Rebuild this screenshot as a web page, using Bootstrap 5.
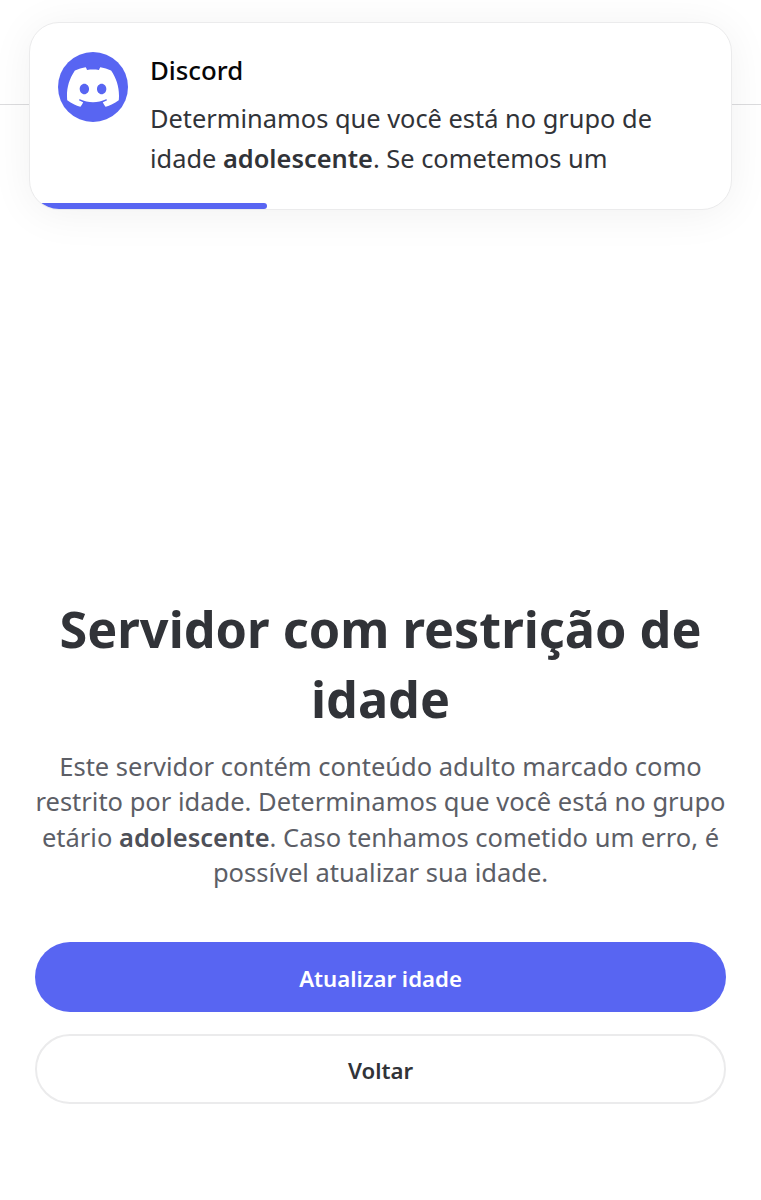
<!DOCTYPE html>
<html lang="pt">
<head>
    <meta charset="UTF-8">
    <meta name="viewport" content="width=device-width, initial-scale=1.0">
    <title>Servidor com restrição de idade</title>
    <link href="https://cdn.jsdelivr.net/npm/bootstrap@5.3.0/dist/css/bootstrap.min.css" rel="stylesheet">
    <style>
        body {
            background-color: #fff;
            font-family: "Noto Sans", sans-serif;
            color: #313338;
        }
        .screen {
            height: 1200px;
            overflow: hidden;
        }
        .top-bar {
            height: 105px;
            border-bottom: 1px solid #dcdcde;
        }
        .notice {
            top: 22px;
            left: 29px;
            width: 703px;
            height: 188px;
            background-color: #fff;
            border: 1px solid #ebebec;
            border-radius: 30px;
            box-shadow: 0 4px 44px rgba(0, 0, 0, .06);
            padding: 29px 28px;
            overflow: hidden;
        }
        .notice-logo {
            width: 70px;
            height: 70px;
            border-radius: 50%;
            background-color: #5865f2;
            flex-shrink: 0;
        }
        .notice-logo svg {
            width: 52px;
            height: 52px;
            fill: #fff;
        }
        .notice-text {
            margin-left: 22px;
        }
        .notice-title {
            font-size: 25.8px;
            line-height: 36px;
            font-weight: 500;
            color: #060607;
        }
        .notice-body {
            font-size: 25.4px;
            line-height: 40px;
            margin-top: 10px;
            color: #313338;
        }
        .notice-body strong,
        .age-text strong {
            font-weight: 600;
        }
        .notice-bar {
            left: 0;
            bottom: 0;
            width: 237px;
            height: 6px;
            background-color: #5865f2;
            border-radius: 0 3px 3px 0;
        }
        .age-title {
            font-size: 50.4px;
            line-height: 70px;
            font-weight: 700;
            color: #313338;
            margin: 0 0 15px;
        }
        .age-text {
            font-size: 25.5px;
            line-height: 35.4px;
            color: #5c5e66;
            margin: 0 -10px 51.4px;
        }
        .age-text strong {
            color: #4e5058;
        }
        .age-content {
            padding: 489px 35px 0;
        }
        .btn-age {
            height: 70px;
            padding: 3px 0 0;
            border-radius: 36px;
            font-size: 22.2px;
            font-weight: 600;
            display: flex;
            align-items: center;
            justify-content: center;
        }
        .btn-age-main {
            background-color: #5865f2;
            border: 0;
            color: #fff;
        }
        .btn-age-back {
            background-color: #fff;
            border: 2px solid #ebebec;
            color: #313338;
        }
        .btn-stack {
            gap: 22px;
        }
    </style>
</head>
<body>
<div class="screen position-relative">
    <div class="top-bar"></div>

    <!-- Notificacao por cima da pagina -->
    <div class="notice position-absolute d-flex align-items-start">
        <div class="notice-logo d-flex align-items-center justify-content-center">
            <svg viewBox="0 0 24 24" aria-hidden="true"><path d="M20.317 4.3698a19.7913 19.7913 0 00-4.8851-1.5152.0741.0741 0 00-.0785.0371c-.211.3753-.4447.8648-.6083 1.2495-1.8447-.2762-3.68-.2762-5.4868 0-.1636-.3933-.4058-.8742-.6177-1.2495a.077.077 0 00-.0785-.037 19.7363 19.7363 0 00-4.8852 1.515.0699.0699 0 00-.0321.0277C.5334 9.0458-.319 13.5799.0992 18.0578a.0824.0824 0 00.0312.0561c2.0528 1.5076 4.0413 2.4228 5.9929 3.0294a.0777.0777 0 00.0842-.0276c.4616-.6304.8731-1.2952 1.226-1.9942a.076.076 0 00-.0416-.1057c-.6528-.2476-1.2743-.5495-1.8722-.8923a.077.077 0 01-.0076-.1277c.1258-.0943.2517-.1923.3718-.2914a.0743.0743 0 01.0776-.0105c3.9278 1.7933 8.18 1.7933 12.0614 0a.0739.0739 0 01.0785.0095c.1202.099.246.1981.3728.2924a.077.077 0 01-.0066.1276 12.2986 12.2986 0 01-1.873.8914.0766.0766 0 00-.0407.1067c.3604.698.7719 1.3628 1.225 1.9932a.076.076 0 00.0842.0286c1.961-.6067 3.9495-1.5219 6.0023-3.0294a.077.077 0 00.0313-.0552c.5004-5.177-.8382-9.6739-3.5485-13.6604a.061.061 0 00-.0312-.0286zM8.02 15.3312c-1.1825 0-2.1569-1.0857-2.1569-2.419 0-1.3332.9555-2.4189 2.157-2.4189 1.2108 0 2.1757 1.0952 2.1568 2.419 0 1.3332-.9555 2.4189-2.1569 2.4189zm7.9748 0c-1.1825 0-2.1569-1.0857-2.1569-2.419 0-1.3332.9554-2.4189 2.1569-2.4189 1.2108 0 2.1757 1.0952 2.1568 2.419 0 1.3332-.946 2.4189-2.1568 2.4189Z"/></svg>
        </div>
        <div class="notice-text">
            <div class="notice-title">Discord</div>
            <div class="notice-body">Determinamos que você está no grupo de<br>idade <strong>adolescente</strong>. Se cometemos um</div>
        </div>
        <div class="notice-bar position-absolute"></div>
    </div>

    <!-- Conteudo principal -->
    <div class="age-content text-center">
        <h1 class="age-title">Servidor com restrição de idade</h1>
        <p class="age-text">Este servidor contém conteúdo adulto marcado como<br>restrito por idade. Determinamos que você está no grupo<br>etário <strong>adolescente</strong>. Caso tenhamos cometido um erro, é<br>possível atualizar sua idade.</p>
        <div class="btn-stack d-flex flex-column">
            <button type="button" class="btn btn-age btn-age-main w-100">Atualizar idade</button>
            <button type="button" class="btn btn-age btn-age-back w-100">Voltar</button>
        </div>
    </div>
</div>
<script src="https://cdn.jsdelivr.net/npm/bootstrap@5.3.0/dist/js/bootstrap.bundle.min.js"></script>
</body>
</html>
